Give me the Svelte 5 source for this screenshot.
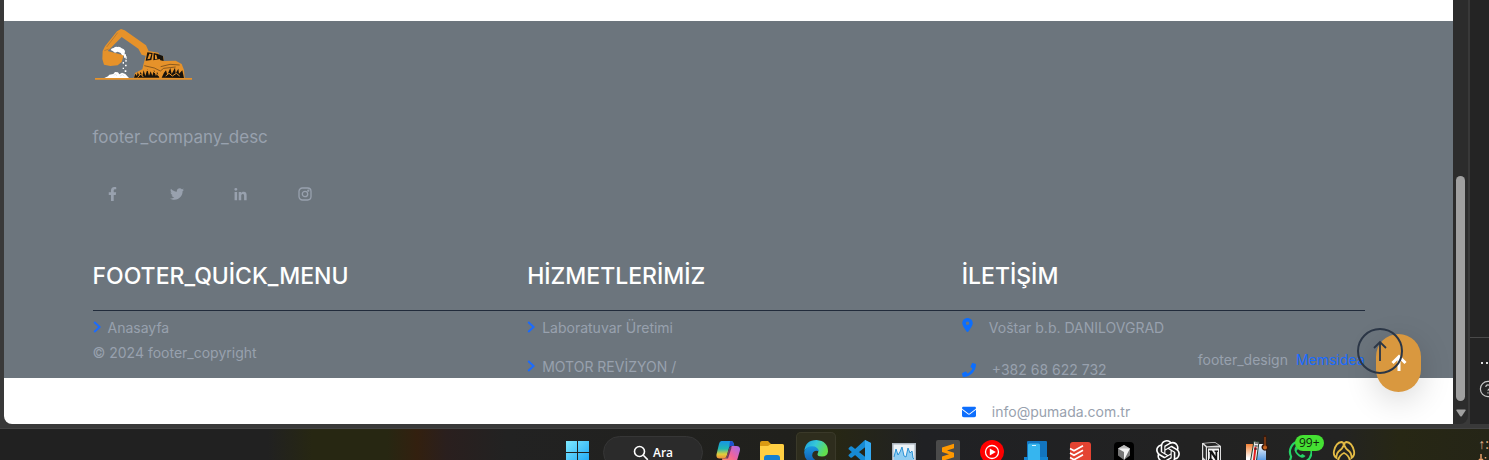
<script>
  const socials = [
    { name: 'Facebook', box: '0 0 320 512', w: 9, d: 'M279.14 288l14.22-92.66h-88.91v-60.13c0-25.35 12.42-50.06 52.24-50.06h40.42V6.26S260.43 0 225.36 0c-73.22 0-121.08 44.38-121.08 124.72v70.62H22.89V288h81.39v224h100.17V288z' },
    { name: 'Twitter', box: '0 0 512 512', w: 14, d: 'M459.37 151.716c.325 4.548.325 9.097.325 13.645 0 138.72-105.583 298.558-298.558 298.558-59.452 0-114.68-17.219-161.137-47.106 8.447.974 16.568 1.299 25.34 1.299 49.055 0 94.213-16.568 130.274-44.832-46.132-.975-84.792-31.188-98.112-72.772 6.498.974 12.995 1.624 19.818 1.624 9.421 0 18.843-1.3 27.614-3.573-48.081-9.747-84.143-51.98-84.143-102.985v-1.299c13.969 7.797 30.214 12.67 47.431 13.319-28.264-18.843-46.781-51.005-46.781-87.391 0-19.492 5.197-37.36 14.294-52.954 51.655 63.675 129.3 105.258 216.365 109.807-1.624-7.797-2.599-15.918-2.599-24.04 0-57.828 46.782-104.934 104.934-104.934 30.213 0 57.502 12.67 76.67 33.137 23.715-4.548 46.456-13.32 66.599-25.34-7.798 24.366-24.366 44.833-46.132 57.827 21.117-2.273 41.584-8.122 60.426-16.243-14.292 20.791-32.161 39.308-52.628 54.253z' },
    { name: 'LinkedIn', box: '0 -32 448 512', w: 13, d: 'M100.28 448H7.4V148.9h92.88zM53.79 108.1C24.09 108.1 0 83.5 0 53.8a53.79 53.79 0 0 1 107.58 0c0 29.7-24.1 54.3-53.79 54.3zM447.9 448h-92.68V302.4c0-34.7-.7-79.2-48.29-79.2-48.29 0-55.69 37.7-55.69 76.7V448h-92.78V148.9h89.08v40.8h1.3c12.4-23.5 42.69-48.3 87.88-48.3 94 0 111.28 61.9 111.28 142.3V448z' }
  ];
  const quickMenu = ['Anasayfa'];
  const services = ['Laboratuvar Üretimi', 'MOTOR REVİZYON /'];
  const contacts = [
    { text: 'Voštar b.b. DANILOVGRAD', box: '0 0 384 512', w: 11, href: '#map', d: 'M215.7 499.2C267 435 384 279.4 384 192C384 86 298 0 192 0S0 86 0 192c0 87.4 117 243 168.3 307.2c12.3 15.3 35.1 15.3 47.4 0zM192 128a64 64 0 1 0 0 128 64 64 0 1 0 0-128z' },
    { text: '+382 68 622 732', box: '0 0 512 512', w: 14, href: 'tel:+38268622732', d: 'M493.4 24.6l-104-24c-11.3-2.6-22.9 3.3-27.5 13.9l-48 112c-4.2 9.8-1.4 21.3 6.9 28l60.6 49.6c-36 76.7-98.9 140.5-177.2 177.2l-49.6-60.6c-6.8-8.3-18.2-11.1-28-6.9l-112 48C3.9 366.5-2 378.1.6 389.4l24 104C27.1 504.2 36.7 512 48 512c256.1 0 464-207.5 464-464 0-11.2-7.7-20.9-18.6-23.4z' },
    { text: 'info@pumada.com.tr', box: '0 0 512 512', w: 14, href: 'mailto:info@pumada.com.tr', d: 'M48 64C21.5 64 0 85.5 0 112c0 15.1 7.1 29.3 19.2 38.4L236.8 313.6c11.4 8.5 27 8.5 38.4 0L492.8 150.4c12.1-9.1 19.2-23.3 19.2-38.4c0-26.5-21.5-48-48-48H48zM0 176V384c0 35.3 28.7 64 64 64H448c35.3 0 64-28.7 64-64V176L294.4 339.2c-22.8 17.1-54 17.1-76.8 0L0 176z' }
  ];
</script>

{#snippet menu(items)}
  <ul class="links">
    {#each items as item}
      <li>
        <a href="#menu">
          <svg width="8" height="14" viewBox="0 0 8 14"><path d="M1.2 1 6.6 6 1.2 11" fill="none" stroke="#1a6bff" stroke-width="2" /></svg>
          {item}
        </a>
      </li>
    {/each}
  </ul>
{/snippet}

<div class="desktop">
  <div class="browser">
    <main class="page">
      <footer>
        <div class="container">
          <a class="logo" href="#home" aria-label="Pumada">
            <svg width="100" height="54" viewBox="24 36 300 162">
              <path d="M30 189h291v5H30z" fill="#e6922a" />
              <path d="M53 108 60 94 96 49 108 42 119 46 183 91 191 109 187 124 170 119 160 101 110 66 78 98 68 108 116 121 110 141 98 151 76 153 57 149 52 132Z" fill="#e6922a" />
              <path d="m65 96 33-43M58 107l13-5" stroke="#9f713c" stroke-width="2" fill="none" />
              <path d="M77 105q2-6 9-6 5-5 12-3 7-2 12 4 8 2 10 8l-2 14-7-2-4-6-9-4-8 3-7-5Z" fill="#fff" />
              <path d="M117 118h6v10h-6zM121 134h4v6h-4zM113 141h4v5h-4zM120 149h5v5h-5zM113 158h4v4h-4zM119 166h5v5h-5zM122 124h3v8h-3z" fill="#fff" />
              <path d="m58 189 11-5 4-5 12-2 5-6 9 1 4 6 8-5 10 4 6 7 5 5Z" fill="#fff" />
              <path d="m86 181 5-3 5 4M105 183l8-4 5 5" stroke="#aab0b7" fill="none" />
              <path d="m175 150 7-27 9-15 29 5 4 10 11 1 1 14 36-1 18 10 7 18 2 24H146l4-15 22-11Z" fill="#e6922a" />
              <path d="m187 112 16 2-4 21-17 2Zm19 2 13 3 5 15-19 4ZM216 116l18 7 2 15-10-2Z" fill="#17130c" />
              <path d="m193 116 6 1-4 14-8 2ZM210 119l4 1 3 11-7 2Z" fill="#e6922a" />
              <path d="m147 188 4-12 5 7 2-11 5 10 4-12 5 13 4-17 5 17 6-20 5 19 5-13 5 13 5-17 6 19 3-14 7 18Z" fill="#17130c" />
              <path d="m230 188 7-15 6-7 4 13 9-20 4 18 10-19 2 17 8-14 2 15 10-10 5 23Z" fill="#17130c" />
              <path d="m178 152 30 7 18 9 10-8 36-4M227 155l28-7 29 2" fill="none" stroke="#5c3c16" stroke-width="2" />
              <path d="m178 166 24 1 24 19M242 183l10-8 10 8 12-8 10 8M158 187l9-10 8 9" fill="none" stroke="#e6922a" stroke-width="3" />
            </svg>
          </a>
          <p class="about">footer_company_desc</p>
          <nav class="social" aria-label="Social">
            {#each socials as s}
              <a href="#social" aria-label={s.name}><svg width={s.w} height="14" viewBox={s.box}><path d={s.d} fill="currentColor" /></svg></a>
            {/each}
            <a href="#social" aria-label="Instagram">
              <svg width="14" height="14" viewBox="0 0 14 14" fill="none" stroke="currentColor" stroke-width="1.3"><rect x="1" y="1" width="12" height="12" rx="3.4" /><circle cx="7" cy="7" r="2.7" /><circle cx="10.3" cy="3.7" r=".5" /></svg>
            </a>
          </nav>

          <div class="columns heads">
            <h2>FOOTER_QUİCK_MENU</h2>
            <h2>HİZMETLERİMİZ</h2>
            <h2>İLETİŞİM</h2>
          </div>
          <div class="columns lists">
            {@render menu(quickMenu)}
            {@render menu(services)}
            <ul class="contact">
              {#each contacts as c}
                <li>
                  <a href={c.href}>
                    <svg width={c.w} height="14" viewBox={c.box}><path d={c.d} fill="#0d6efd" fill-rule="evenodd" /></svg>
                    <span>{c.text}</span>
                  </a>
                </li>
              {/each}
            </ul>
          </div>
          <div class="legal">
            <span>© 2024 footer_copyright</span>
            <span class="design">footer_design <a href="#design">Memsidea</a></span>
          </div>
        </div>
      </footer>
      <button class="pill" aria-label="Back to top">
        <svg width="16" height="18" viewBox="0 0 16 18" fill="none" stroke="#fff" stroke-width="3"><path d="M8 17V3M1.500 9 8 2.500 14.500 9" /></svg>
      </button>
      <button class="ring" aria-label="Scroll up">
        <svg width="14" height="22" viewBox="0 0 14 22" fill="none" stroke="#2b3646" stroke-width="1.8"><path d="M7 21V2M1 8l6-6 6 6" /></svg>
      </button>
    </main>
    <div class="scrollbar">
      <div class="thumb"></div>
      <svg width="10" height="8" viewBox="0 0 10 8"><path d="M1 .5h8q1 0 .6 1L6 7q-1 1-2 0L.4 1.500Q0 .5 1 .5Z" fill="#a0a0a0" /></svg>
    </div>
    <aside class="panel">
      <div class="panel-top"></div>
      <div class="panel-tools">
        <span class="dots"><i></i><i></i><i></i></span>
        <svg width="18" height="18" viewBox="0 0 18 18" fill="none" stroke="#c8c8c8" stroke-width="1.2"><circle cx="9" cy="9" r="7.600" /><path d="M6.800 7a2.200 2.200 0 1 1 3.400 1.900C9.300 9.500 9 9.900 9 10.700M9 12.300v1.300" /></svg>
      </div>
    </aside>
  </div>

  <div class="taskbar">
    <button class="app start" aria-label="Start">
      <svg width="24" height="24" viewBox="0 0 24 24">
        <defs><linearGradient id="win" x2="1" y2="1" gradientUnits="objectBoundingBox"><stop stop-color="#7fe9ff" /><stop offset="1" stop-color="#1aa5f5" /></linearGradient></defs>
        <path d="M1 1h11v11H1zM13 1h11v11H13zM1 13h11v11H1zM13 13h11v11H13z" fill="url(#win)" />
      </svg>
    </button>
    <button class="search">
      <svg width="16" height="16" viewBox="0 0 16 16" fill="none" stroke="#fff" stroke-width="1.600"><circle cx="6.500" cy="6.500" r="5" /><path d="m10.300 10.300 4.500 4.500" /></svg>
      Ara
    </button>
    <button class="app" aria-label="Copilot">
      <svg width="24" height="24" viewBox="0 0 24 24">
        <defs>
          <linearGradient id="cpa" x1="0" y1="0" x2="0" y2="1"><stop stop-color="#1793e6" /><stop offset=".45" stop-color="#22b8b0" /><stop offset=".75" stop-color="#e2cf3a" /><stop offset="1" stop-color="#f08a3a" /></linearGradient>
          <linearGradient id="cpb" x1="1" y1="0" x2="0" y2="1"><stop stop-color="#a46af0" /><stop offset=".5" stop-color="#f0649a" /><stop offset="1" stop-color="#ff9a5a" /></linearGradient>
        </defs>
        <path d="M5.500 1H15q2 0 2.600 2l.7 2.500h-2.600q-2 0-2.700 2.200L10.600 16q-.7 2.500-3 2.500H3.400Q-.3 18.500.6 14L3 4Q3.600 1 5.500 1Z" fill="url(#cpa)" />
        <path d="M14 1.200q2.500-.6 3.500 1.800l.8 2.700h-2.600q-2 0-2.700 2.200Z" fill="#1e4fd0" />
        <path d="M20.500 6q4.400.2 3.300 5L21 20.500q-1 3-4 3H9q-2-.3-2.600-3L6 18.500h2q2.300 0 3-2.500l2.500-8q.7-2 2.700-2Z" fill="url(#cpb)" />
        <path d="M15.500 6h-1.400L11 16.500q-.7 2-2.500 2H12l3.300-10Z" fill="#3b2149" opacity=".7" />
      </svg>
    </button>
    <button class="app" aria-label="Explorer">
      <svg width="24" height="24" viewBox="0 0 24 24"><path d="M0 3q0-2 2-2h6l3 3H22q2 0 2 2v5H0Z" fill="#d99a13" /><path d="M0 6h8l3-2h11q2 0 2 2v18H0Z" fill="#ffcf43" /><path d="M4 24v-6q0-3 3-3h10q3 0 3 3v6Z" fill="#137fd0" /></svg>
    </button>
    <button class="app active" aria-label="Edge">
      <svg width="24" height="24" viewBox="0 0 24 24">
        <defs><linearGradient id="eda" x2="1" y2=".4"><stop stop-color="#199de0" /><stop offset=".5" stop-color="#36c8d8" /><stop offset="1" stop-color="#62df4e" /></linearGradient><linearGradient id="edb" x2="0" y2="1"><stop stop-color="#1996df" /><stop offset="1" stop-color="#1258ac" /></linearGradient></defs>
        <path d="M.2 11Q1.500 0 12.500 0 24 1 24 11.500q-.5 5-6 5-5 0-4.500-2.500Q16 9.500 11 7.500 4 5.500.2 11Z" fill="url(#eda)" />
        <path d="M.1 12Q2 6.300 8 6.300q6 0 7 5.500-.5-1-3-1-4 .7-3.800 5.200.8 4.500 7 5 4 0 7-2-3.500 5-10 5Q.5 23 .1 12Z" fill="url(#edb)" />
      </svg>
    </button>
    <button class="app" aria-label="Visual Studio Code">
      <svg width="24" height="24" viewBox="0 0 24 24"><path d="m17 0 6 3v18l-6 3L1 9.500q-1-.8 0-1.700l1.400-1.200q.8-.6 1.600 0L18 17.500V6.500L4 17.400q-.8.600-1.600 0L1 16.200q-1-.8 0-1.700Z" fill="#168bd5" /><path d="m17 0 6 3v18l-6 3Z" fill="#35aaf2" /></svg>
    </button>
    <button class="app" aria-label="Monitor">
      <svg width="24" height="24" viewBox="0 0 24 24"><path d="M0 3h24v21H0z" fill="#a9b2bb" /><path d="M1.500 4.500h21V24h-21z" fill="#edf3f7" /><path d="m2 17 2-8 2 6 2-3 2-5 2 9 2 1 2-9 2 5 2-2 1 7 1 1v5H2Z" fill="#8fcdf2" /><path d="m2 17 2-8 2 6 2-3 2-5 2 9 2 1 2-9 2 5 2-2 1 7 1 1" fill="none" stroke="#2b93d6" /></svg>
    </button>
    <button class="app" aria-label="Sublime Text">
      <svg width="24" height="24" viewBox="0 0 24 24"><rect width="24" height="24" rx="2" fill="#4a4a4a" /><path d="m6 7.500 12-3.800v4.500L11 10.500l7 2.300v4.500L6 21v-4.500l7-2.200-7-2.200Z" fill="#ff9800" /></svg>
    </button>
    <button class="app" aria-label="YouTube Music">
      <svg width="24" height="24" viewBox="0 0 24 24"><circle cx="12" cy="12" r="12" fill="#f00" /><circle cx="12" cy="12" r="6.500" fill="none" stroke="#fff" stroke-width="1.300" /><path d="m9.800 8.500 6 3.500-6 3.500Z" fill="#fff" /></svg>
    </button>
    <button class="app" aria-label="Phone Link">
      <svg width="24" height="24" viewBox="0 0 24 24"><path d="M3 2q0-1 1-1h18q1 0 1 1v16H3Z" fill="#1275c0" /><path d="M0 17h24v4H0Z" fill="#1484d2" /><path d="M4 5q0-1.500 1.500-1.500h9Q16 3.500 16 5v19H4Z" fill="#36b5ef" /><path d="M8 5.500h4" stroke="#d8f4ff" /></svg>
    </button>
    <button class="app" aria-label="Todoist">
      <svg width="24" height="24" viewBox="0 0 24 24"><rect x="2" y="2" width="21" height="22" rx="3" fill="#e44332" /><path d="m2 8.500 4 2.300 9-5M2 13l4 2.300 9-5M2 17.500l4 2.300 9-5" fill="none" stroke="#fff" stroke-width="1.600" /></svg>
    </button>
    <button class="app" aria-label="Cursor">
      <svg width="24" height="24" viewBox="0 0 24 24"><rect x="2" y="2" width="20" height="22" rx="4" fill="#000" /><path d="m12 5 6 3.500v7L12 20l-6-4.500v-7Z" fill="#777" /><path d="m6 8.500 6-3.500 6 3.500-6 1Z" fill="#bbb" /><path d="M6 8.500h12L12 20v-8Z" fill="#f3f3f3" /></svg>
    </button>
    <button class="app" aria-label="ChatGPT">
      <svg width="24" height="24" viewBox="0 0 24 24"><path fill="#fff" d="M22.2819 9.8211a5.9847 5.9847 0 0 0-.5157-4.9108 6.0462 6.0462 0 0 0-6.5098-2.9A6.0651 6.0651 0 0 0 4.9807 4.1818a5.9847 5.9847 0 0 0-3.9977 2.9 6.0462 6.0462 0 0 0 .7427 7.0966 5.98 5.98 0 0 0 .511 4.9107 6.051 6.051 0 0 0 6.5146 2.9001A5.9847 5.9847 0 0 0 13.2599 24a6.0557 6.0557 0 0 0 5.7718-4.2058 5.9894 5.9894 0 0 0 3.9977-2.9001 6.0557 6.0557 0 0 0-.7475-7.0729zm-9.022 12.6081a4.4755 4.4755 0 0 1-2.8764-1.0408l.1419-.0804 4.7783-2.7582a.7948.7948 0 0 0 .3927-.6813v-6.7369l2.02 1.1686a.071.071 0 0 1 .038.052v5.5826a4.504 4.504 0 0 1-4.4945 4.4944zm-9.6607-4.1254a4.4708 4.4708 0 0 1-.5346-3.0137l.142.0852 4.783 2.7582a.7712.7712 0 0 0 .7806 0l5.8428-3.3685v2.3324a.0804.0804 0 0 1-.0332.0615L9.74 19.9502a4.4992 4.4992 0 0 1-6.1408-1.6464zM2.3408 7.8956a4.485 4.485 0 0 1 2.3655-1.9728V11.6a.7664.7664 0 0 0 .3879.6765l5.8144 3.3543-2.0201 1.1685a.0757.0757 0 0 1-.071 0l-4.8303-2.7865A4.504 4.504 0 0 1 2.3408 7.872zm16.5963 3.8558L13.1038 8.364 15.1192 7.2a.0757.0757 0 0 1 .071 0l4.8303 2.7913a4.4944 4.4944 0 0 1-.6765 8.1042v-5.6772a.79.79 0 0 0-.407-.667zm2.0107-3.0231l-.142-.0852-4.7735-2.7818a.7759.7759 0 0 0-.7854 0L9.409 9.2297V6.8974a.0662.0662 0 0 1 .0284-.0615l4.8303-2.7866a4.4992 4.4992 0 0 1 6.6802 4.66zM8.3065 12.863l-2.02-1.1638a.0804.0804 0 0 1-.038-.0567V6.0742a4.4992 4.4992 0 0 1 7.3757-3.4537l-.142.0805L8.704 5.459a.7948.7948 0 0 0-.3927.6813zm1.0976-2.3654l2.602-1.4998 2.6069 1.4998v2.9994l-2.5974 1.4997-2.6067-1.4997Z" /></svg>
    </button>
    <button class="app" aria-label="Notion">
      <svg width="24" height="24" viewBox="0 0 24 24"><path d="m2 3 13-1 6 4v18H6l-4-4Z" fill="#ddd" /><path d="m4 3.600 11-.8 4 2.800-12 .6ZM3.200 4.800l2.600 2.400v13l-2.600-3Z" fill="#262626" /><path d="M7 7.500h13V24H7z" fill="#262626" /><path d="M8 8.500h11V24H8z" fill="#f4f4f4" /><path d="M9 10.500h3l3.500 5.500v-4l-1-.3v-1.200H18v1.200l-.8.3V20h-1.700l-4-6v4.500l1.200.4V20H9v-1.100l.8-.4v-6.500l-.8-.4Z" fill="#111" /></svg>
    </button>
    <button class="app" aria-label="Temperature">
      <svg width="24" height="24" viewBox="0 0 24 24">
        <defs><linearGradient id="heat" x2="0" y2="1"><stop stop-color="#f28135" /><stop offset=".7" stop-color="#fff" /></linearGradient><linearGradient id="cold" x2="0" y2="1"><stop stop-color="#fff" /><stop offset="1" stop-color="#3285e0" /></linearGradient></defs>
        <path d="M2 4h9v20H2z" fill="url(#heat)" /><path d="M12 4h10v20H12z" fill="url(#cold)" /><path d="m10 1 5 1-3 22H6Z" fill="#eee" stroke="#243b2c" /><path d="m11.500 7-2 17" stroke="#e02020" stroke-width="2" /><path d="M14 3h-3m2.600 3h-3m2.600 3h-3" stroke="#111" />
      </svg>
      <svg class="over thermo" width="8" height="16" viewBox="0 0 8 16"><path d="M2.500 2q0-2 1.500-2t1.500 2v7a3.500 3.500 0 1 1-3 0Z" fill="#37180b" /><circle cx="4" cy="12.500" r="2" fill="#c8641e" /><path d="M4 2v10" stroke="#b6551a" /></svg>
    </button>
    <button class="app" aria-label="WhatsApp">
      <svg width="24" height="24" viewBox="0 0 24 24" fill="none" stroke="#25d366" stroke-width="2.200"><path d="m1.500 22.500 1.600-5.800A10.800 10.800 0 1 1 7 21Z" /><path d="M8 6q-2 2-1.500 4.500Q8 15 13 17.500q3 1 4.500-1.500l-3-2-2 1.200Q9.500 13.500 8.500 11L10 9Z" fill="#25d366" stroke="none" /></svg>
      <span class="over badge">99+</span>
    </button>
    <button class="app" aria-label="Paw">
      <svg width="24" height="24" viewBox="0 0 24 24" fill="none" stroke="#e3bb45" stroke-width="1.800"><path d="M4.500 18Q1 16 2 11 4 2.500 9.500 2q2.500.2 2 3.500Q10.500 9 6.500 11.500 4 14 4.500 18ZM19.500 18Q23 16 22 11 20 2.500 14.500 2q-2.500.2-2 3.500 1 3.500 5 6 2.500 2.500 2 6.500Z" /><path d="M6 24q-.5-8 6-11 6.500 3 6 11" /></svg>
    </button>
    <div class="tray">
      <span>↑:</span>
      <svg width="9" height="8" viewBox="0 0 9 8" fill="none" stroke="#e9a06a" stroke-width="1.500"><path d="M3 0v7M1 5l2 2 2-2M7.500 3v1.500" /></svg>
    </div>
  </div>
</div>

<style>
  :global(body) { margin: 0; background: #222; }
  * { box-sizing: border-box; }
  a { color: inherit; text-decoration: none; }
  button { border: 0; padding: 0; background: none; font: inherit; color: inherit; cursor: pointer; }
  ul, p, h2 { margin: 0; padding: 0; list-style: none; }
  svg { display: block; flex: none; }

  .desktop { display: flex; flex-direction: column; height: 100vh; overflow: hidden; font-family: Inter, "Liberation Sans", sans-serif; }
  .browser { flex: 1; min-height: 0; display: flex; padding: 0 0 4px 4px; background: #393939; }
  .page { position: relative; flex: 1; min-width: 0; overflow: hidden; padding-top: 21px; background: #fff; border-radius: 0 0 0 8px; color: #98a1ae; font-size: 14px; line-height: 24px; }
  footer { background: #6c757d; padding: 6px 32px 6px; }
  .container { max-width: 1272px; margin: 0 auto; }
  .logo { display: block; width: 100px; }
  .about { margin-top: 44px; font-size: 17px; }
  .social { display: flex; gap: 24px; margin-top: 25px; }
  .social a { display: grid; place-items: center; width: 40px; height: 40px; }
  .columns { display: grid; grid-template-columns: repeat(3, 1fr); column-gap: 32px; }
  .heads { margin-top: 46px; padding-bottom: 18px; border-bottom: 1px solid #212b3b; }
  h2 { color: #fff; font-size: 23px; line-height: 32px; font-weight: 500; }
  /* rows past the first spill below the fixed strip and over the legal line */
  .lists { height: 30px; padding-top: 5px; }
  .links { display: grid; align-content: start; row-gap: 15px; }
  .links a { display: flex; align-items: center; gap: 7px; }
  .contact { display: grid; align-content: start; row-gap: 18px; }
  .contact a { display: flex; align-items: center; gap: 16px; width: max-content; position: relative; }
  .contact li:first-child a { align-items: flex-start; padding-top: 2px; line-height: 20px; }
  .contact li:first-child { height: 24px; }
  .legal { display: flex; justify-content: space-between; align-items: flex-start; }
  .design { padding-top: 7px; }
  .design a { margin-left: 4px; color: #1a6bff; }

  .pill { position: absolute; right: 32px; bottom: 32px; display: grid; place-items: center; width: 45px; height: 58px; border-radius: 23px; background: #d9983f; box-shadow: 0 8px 32px rgba(0, 0, 0, 0.16); }
  .ring { position: absolute; right: 50px; bottom: 50px; display: grid; place-items: center; width: 46px; height: 46px; border: 2px solid #2b3646; border-radius: 50%; }

  .scrollbar { display: flex; flex-direction: column; align-items: center; justify-content: flex-end; gap: 8px; width: 15px; padding-bottom: 7px; background: #2c2c2c; border-radius: 0 0 8px 0; }
  .thumb { width: 9px; height: 54%; border-radius: 5px; background: #a0a0a0; }
  .panel { display: flex; flex-direction: column; width: 19px; margin-left: 2px; background: #242424; overflow: hidden; }
  .panel-top { flex: 1; border-bottom: 1px solid #4a4a4a; }
  .panel-tools { display: grid; align-content: start; justify-items: start; gap: 16px; height: 86px; padding: 24px 0 0 9px; }
  .dots { display: flex; gap: 3px; padding-left: 2px; }
  .dots i { width: 2px; height: 2px; background: #ddd; }

  .taskbar { display: flex; align-items: flex-start; gap: 4px; height: 32px; padding: 3px 0 0 557px; overflow: hidden; border-top: 1px solid #444; background: linear-gradient(90deg, #212121 18%, #272712 21%, #272712 26%, #33200f 28%, #2a1f1e 30%, #222 34%, #20201c 53%, #272714 56%, #202124 62%, #222 80%, #232322 90%, #272714 94%, #252517 100%); color: #fff; }
  .app { position: relative; flex: none; display: grid; place-items: center; width: 40px; height: 40px; border-radius: 5px; }
  .active { background: #2e2d1d; box-shadow: inset 0 0 0 1px #3a3929; }
  .search { flex: none; display: flex; align-items: center; justify-content: center; gap: 4px; width: 100px; height: 33px; margin: 4px 1px 0 2px; border: 1px solid #363636; border-radius: 17px; background: #2b2b2b; font-family: "Open Sans", sans-serif; font-size: 12px; font-weight: 600; }
  .over { position: absolute; }
  .thermo { right: 7px; top: 3px; }
  .badge { left: 15px; top: 3px; padding: 0 4px; border-radius: 8px; background: #45e033; color: #10240c; font: 12px/16px "Open Sans", sans-serif; }
  .tray { display: grid; gap: 2px; margin-left: auto; padding-top: 4px; color: #e9b48a; font: 14px/16px "Open Sans", sans-serif; }
</style>
